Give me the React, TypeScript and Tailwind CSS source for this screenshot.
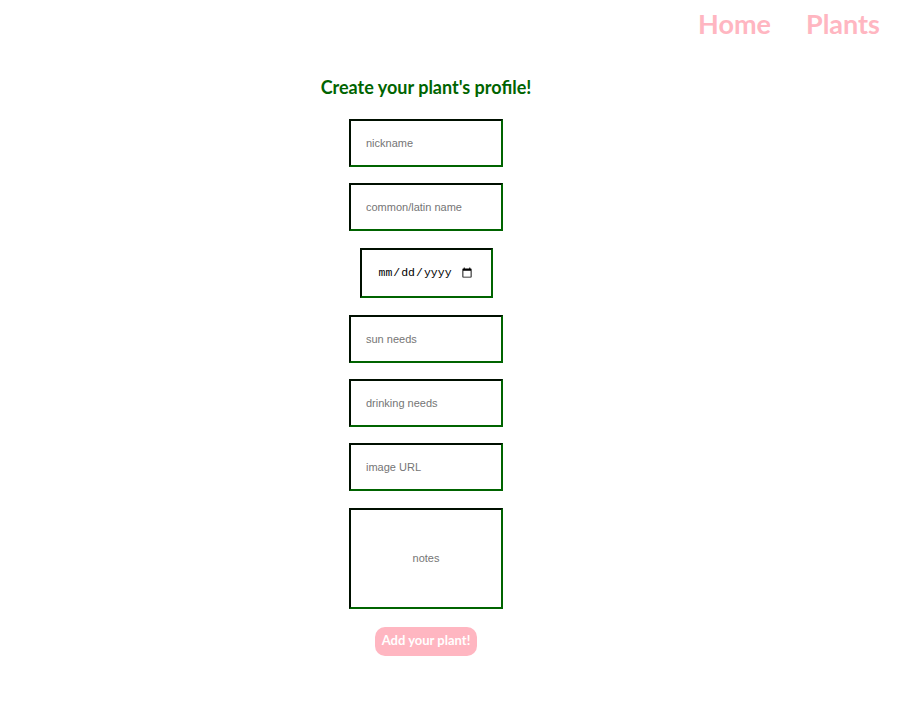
import React from "react";

const fieldClass =
  "w-[154px] h-[48px] border-2 border-[#006400] [border-style:inset] px-[15px] text-[11px] font-['Liberation_Sans',Arial,sans-serif] text-black placeholder:text-[#757575] outline-none bg-white";

export default function App() {
  return (
    <div className="min-h-[720px] bg-white font-['Lato','DejaVu_Sans',sans-serif]">
      {/* Nav */}
      <nav className="flex justify-end gap-[35px] pr-[20px] pt-[4px]">
        <a href="#" className="text-[27px] font-bold text-[#ffb6c1]">Home</a>
        <a href="#" className="text-[27px] font-bold text-[#ffb6c1]">Plants</a>
      </nav>

      {/* Form */}
      <div className="w-[852px] flex flex-col items-center">
        <h2 className="mt-[29px] text-[18px] font-bold text-[#006400]">Create your plant's profile!</h2>
        <form className="mt-[18px] flex flex-col items-center gap-[16px]" onSubmit={(e) => e.preventDefault()}>
          <input className={fieldClass} placeholder="nickname" />
          <input className={fieldClass} placeholder="common/latin name" />
          <input
            type="date"
            className="my-px w-[133px] h-[50px] border-2 border-[#006400] [border-style:inset] pl-[16px] pr-[16px] text-[11.5px] font-['Liberation_Mono',monospace] text-black outline-none bg-white"
          />
          <input className={fieldClass} placeholder="sun needs" />
          <input className={fieldClass} placeholder="drinking needs" />
          <input className={fieldClass} placeholder="image URL" />
          <textarea
            className="mt-px w-[154px] h-[101px] border-2 border-[#006400] [border-style:inset] pt-[40px] px-[15px] text-[11px] font-['Liberation_Sans',Arial,sans-serif] text-center text-black placeholder:text-[#757575] outline-none resize-none bg-white"
            placeholder="notes"
          />
          <button
            type="submit"
            className="mt-[2px] w-[102px] h-[29px] rounded-[10px] bg-[#ffb6c1] text-white text-[13px] font-bold"
          >
            Add your plant!
          </button>
        </form>
      </div>
    </div>
  );
}
